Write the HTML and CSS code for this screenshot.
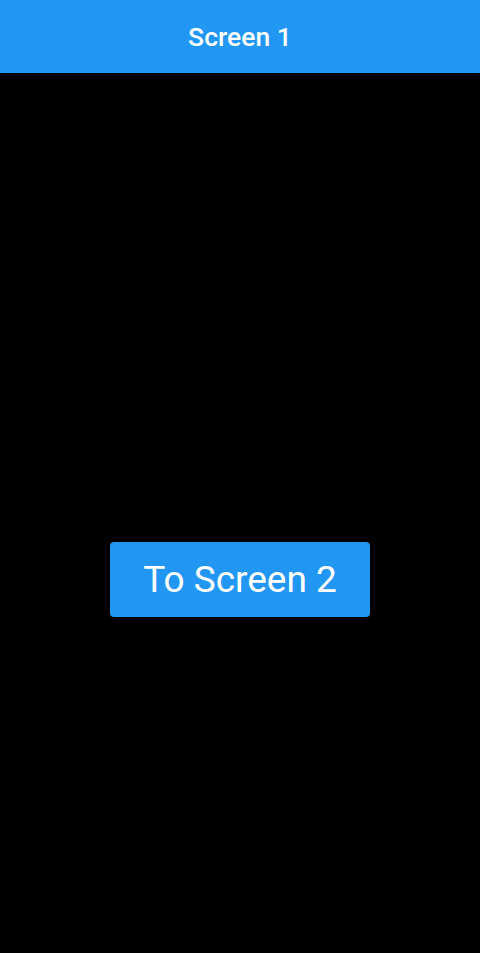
FILE: index.html
```html
<!DOCTYPE html>
<html>
<head>
<meta charset="utf-8">
<link rel="stylesheet" href="styles.css">
</head>
<body>
<header class="app-bar"><h1 class="title">Screen 1</h1></header>
<main class="content">
<button class="nav-button">To Screen 2</button>
</main>
</body>
</html>
```
FILE: styles.css
```css
html, body {
  margin: 0;
  padding: 0;
  background: #000;
  height: 100%;
}
body {
  font-family: Roboto, "Noto Sans", sans-serif;
  display: flex;
  flex-direction: column;
}
.app-bar {
  height: 73px;
  background: #2196F3;
  display: flex;
  align-items: center;
  justify-content: center;
  flex-shrink: 0;
}
.title {
  margin: 0;
  color: #fff;
  font-size: 26.5px;
  font-weight: 500;
}
.content {
  flex: 1;
  display: flex;
  flex-direction: column;
  align-items: center;
  padding-top: 469px;
}
.nav-button {
  width: 260px;
  height: 75px;
  background: #2196F3;
  color: #fff;
  border: none;
  border-radius: 4px;
  font-family: Roboto, sans-serif;
  font-size: 37px;
  font-weight: 400;
  padding: 0;
}
```
